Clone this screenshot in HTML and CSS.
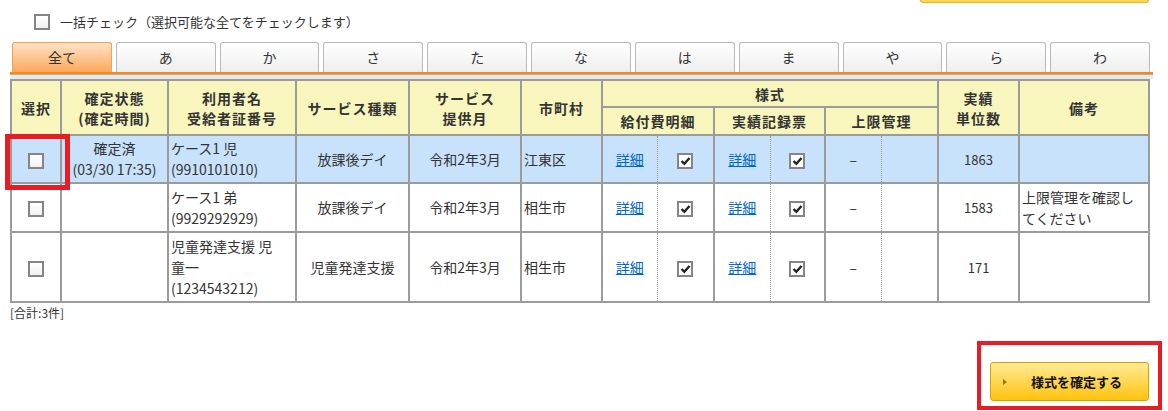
FILE: index.html
```html
<!DOCTYPE html>
<html lang="ja">
<head>
<meta charset="utf-8">
<title>様式確定</title>
<link rel="stylesheet" href="styles.css">
</head>
<body>
<div class="page">
  <div class="toprow"><div class="topbtn"></div></div>
  <div class="bulk"><span class="cb"></span><span>一括チェック（選択可能な全てをチェックします）</span></div>
  <div class="tabs">
    <div class="tab active">全て</div>
    <div class="tab">あ</div>
    <div class="tab">か</div>
    <div class="tab">さ</div>
    <div class="tab">た</div>
    <div class="tab">な</div>
    <div class="tab">は</div>
    <div class="tab">ま</div>
    <div class="tab">や</div>
    <div class="tab">ら</div>
    <div class="tab">わ</div>
  </div>
  <div class="tabline"></div>
  <div class="tabbar"></div>
  <div class="tablewrap">
    <table class="list">
      <colgroup>
        <col class="w50"><col class="w107"><col class="w128"><col class="w113"><col class="w112"><col class="w81">
        <col class="w55"><col class="w57"><col class="w56"><col class="w55"><col class="w56"><col class="w57">
        <col class="w81"><col class="w130">
      </colgroup>
      <thead>
        <tr class="h1">
          <th rowspan="2">選択</th>
          <th rowspan="2">確定状態<br>(確定時間)</th>
          <th rowspan="2">利用者名<br>受給者証番号</th>
          <th rowspan="2">サービス種類</th>
          <th rowspan="2">サービス<br>提供月</th>
          <th rowspan="2">市町村</th>
          <th colspan="6">様式</th>
          <th rowspan="2">実績<br>単位数</th>
          <th rowspan="2">備考</th>
        </tr>
        <tr class="h2">
          <th colspan="2">給付費明細</th>
          <th colspan="2">実績記録票</th>
          <th colspan="2">上限管理</th>
        </tr>
      </thead>
      <tbody>
        <tr class="r1 sel">
          <td class="c"><span class="cb"></span></td>
          <td class="c"><span class="line">確定済</span><span class="line">(03/30 17:35)</span></td>
          <td class="l name"><span class="line">ケース1 児</span><span class="line">(9910101010)</span></td>
          <td class="c">放課後デイ</td>
          <td class="c">令和2年3月</td>
          <td class="l">江東区</td>
          <td class="c sa"><a class="link" href="#">詳細</a></td>
          <td class="c sb"><span class="cb on"><svg viewBox="0 0 13 12" width="13" height="12"><polyline points="2.5,6 5.3,8.8 10.5,3" fill="none" stroke="#222" stroke-width="2.4"/></svg></span></td>
          <td class="c sa"><a class="link" href="#">詳細</a></td>
          <td class="c sb"><span class="cb on"><svg viewBox="0 0 13 12" width="13" height="12"><polyline points="2.5,6 5.3,8.8 10.5,3" fill="none" stroke="#222" stroke-width="2.4"/></svg></span></td>
          <td class="c sa">–</td>
          <td class="c sb"></td>
          <td class="c num">1863</td>
          <td class="l"></td>
        </tr>
        <tr class="r2">
          <td class="c"><span class="cb"></span></td>
          <td class="c"></td>
          <td class="l name"><span class="line">ケース1 弟</span><span class="line">(9929292929)</span></td>
          <td class="c">放課後デイ</td>
          <td class="c">令和2年3月</td>
          <td class="l">相生市</td>
          <td class="c sa"><a class="link" href="#">詳細</a></td>
          <td class="c sb"><span class="cb on"><svg viewBox="0 0 13 12" width="13" height="12"><polyline points="2.5,6 5.3,8.8 10.5,3" fill="none" stroke="#222" stroke-width="2.4"/></svg></span></td>
          <td class="c sa"><a class="link" href="#">詳細</a></td>
          <td class="c sb"><span class="cb on"><svg viewBox="0 0 13 12" width="13" height="12"><polyline points="2.5,6 5.3,8.8 10.5,3" fill="none" stroke="#222" stroke-width="2.4"/></svg></span></td>
          <td class="c sa">–</td>
          <td class="c sb"></td>
          <td class="c num">1583</td>
          <td class="l">上限管理を確認してください</td>
        </tr>
        <tr class="r3">
          <td class="c"><span class="cb"></span></td>
          <td class="c"></td>
          <td class="l name"><span class="line">児童発達支援 児童一</span><span class="line">(1234543212)</span></td>
          <td class="c">児童発達支援</td>
          <td class="c">令和2年3月</td>
          <td class="l">相生市</td>
          <td class="c sa"><a class="link" href="#">詳細</a></td>
          <td class="c sb"><span class="cb on"><svg viewBox="0 0 13 12" width="13" height="12"><polyline points="2.5,6 5.3,8.8 10.5,3" fill="none" stroke="#222" stroke-width="2.4"/></svg></span></td>
          <td class="c sa"><a class="link" href="#">詳細</a></td>
          <td class="c sb"><span class="cb on"><svg viewBox="0 0 13 12" width="13" height="12"><polyline points="2.5,6 5.3,8.8 10.5,3" fill="none" stroke="#222" stroke-width="2.4"/></svg></span></td>
          <td class="c sa">–</td>
          <td class="c sb"></td>
          <td class="c num">171</td>
          <td class="l"></td>
        </tr>
      </tbody>
    </table>
    <div class="mark1"></div>
  </div>
  <div class="total">[合計:3件]</div>
  <div class="actions">
    <div class="mark2">
      <button class="btn" type="button"><span class="arrow"></span><span class="btntext">様式を確定する</span></button>
    </div>
  </div>
</div>
</body>
</html>
```

FILE: styles.css
```css
html, body {
  margin: 0;
  padding: 0;
  background: #fff;
}
body {
  font-family: "Noto Sans CJK JP", "Noto Sans", sans-serif;
  color: #333;
  overflow: hidden;
}
.page {
  padding-left: 10px;
  width: 1158px;
}
.toprow {
  display: flex;
  justify-content: flex-end;
  width: 1140px;
  height: 3px;
}
.topbtn {
  width: 227px;
  height: 2px;
  margin-right: 1px;
  background: #ffd54f;
  border: 1px solid #e3b33a;
  border-top: none;
  border-radius: 0 0 3px 3px;
}
.bulk {
  display: flex;
  align-items: center;
  gap: 10px;
  margin-top: 11px;
  padding-left: 24px;
  height: 16px;
  font-size: 13px;
  line-height: 16px;
  color: #333;
}
.cb {
  display: inline-block;
  box-sizing: border-box;
  width: 16px;
  height: 16px;
  border: 2px solid #858585;
  background: linear-gradient(#ffffff, #f0f0f0);
  flex: none;
  vertical-align: middle;
}
.cb.on {
  background: #fff;
}
.cb.on svg {
  display: block;
  margin: 0 auto;
}
.tabs {
  display: flex;
  gap: 4px;
  margin-top: 12px;
  margin-left: 2px;
  width: 1138px;
  height: 30px;
}
.tab {
  flex: 1;
  box-sizing: border-box;
  border: 1px solid #b9b9b9;
  border-bottom: none;
  border-radius: 3px 3px 0 0;
  background: linear-gradient(#ffffff, #eeeeee);
  text-align: center;
  line-height: 29px;
  font-size: 14px;
  color: #333;
}
.tab.active {
  background: linear-gradient(#ffe3c8, #fba85a);
  border-color: #f3a353;
}
.tabline {
  width: 1143px;
  height: 2px;
  background: #f78a12;
}
.tabbar {
  width: 1143px;
  height: 5px;
  box-sizing: border-box;
  background: #e9e9e9;
  border-top: 1px solid #b0b0b0;
}
.tablewrap {
  position: relative;
  width: 1140px;
}
table.list {
  width: 1140px;
  border-collapse: collapse;
  table-layout: fixed;
  font-size: 14px;
  color: #333;
}
col.w50 { width: 50px; }
col.w107 { width: 107px; }
col.w128 { width: 128px; }
col.w113 { width: 113px; }
col.w112 { width: 112px; }
col.w81 { width: 81px; }
col.w55 { width: 55px; }
col.w57 { width: 57px; }
col.w56 { width: 56px; }
col.w130 { width: 130px; }
.list th,
.list td {
  border: 2px solid #9b9b9b;
  vertical-align: middle;
}
.list th {
  background: #f8f6bd;
  font-weight: bold;
  letter-spacing: 1px;
  line-height: 20px;
  padding: 0;
  text-align: center;
}
tr.h1 { height: 27px; }
tr.h2 { height: 28px; }
.list td {
  line-height: 21px;
  padding: 2px;
  background: #fff;
}
tr.r1 { height: 48px; }
tr.r2 { height: 49px; }
tr.r3 { height: 70px; }
tr.sel td {
  background: #c8e2fc;
}
.c { text-align: center; }
.l { text-align: left; }
.list td.name { padding-right: 22px; }
.line { display: block; }
.num { font-size: 13px; }
.link {
  color: #0068c6;
  text-decoration: underline;
}
.list td.sa { border-right: 1px dotted #999; }
.list td.sb { border-left: 1px dotted #999; }
.mark1 {
  position: absolute;
  left: -5px;
  top: 55px;
  width: 65px;
  height: 56px;
  box-sizing: border-box;
  border: 5px solid #e81c24;
}
.total {
  font-size: 12px;
  line-height: 18px;
  margin-top: 1px;
  color: #333;
}
.actions {
  display: flex;
  justify-content: flex-end;
  width: 1152px;
  margin-top: 19px;
}
.mark2 {
  border: 4px solid #e81c24;
  padding: 17px 9px 5px 9px;
}
.btn {
  display: flex;
  align-items: center;
  width: 159px;
  height: 39px;
  box-sizing: border-box;
  margin: 0;
  padding: 0 0 0 12px;
  border: 1px solid #d6a400;
  border-radius: 3px;
  background: linear-gradient(#ffeb94, #ffc20e);
  font-family: "Noto Sans CJK JP", sans-serif;
  font-size: 13px;
  font-weight: bold;
  color: #111;
  cursor: pointer;
}
.arrow {
  width: 0;
  height: 0;
  border-left: 4px solid #9a7400;
  border-top: 3px solid transparent;
  border-bottom: 3px solid transparent;
  flex: none;
}
.btntext {
  margin-left: 24px;
}
```
